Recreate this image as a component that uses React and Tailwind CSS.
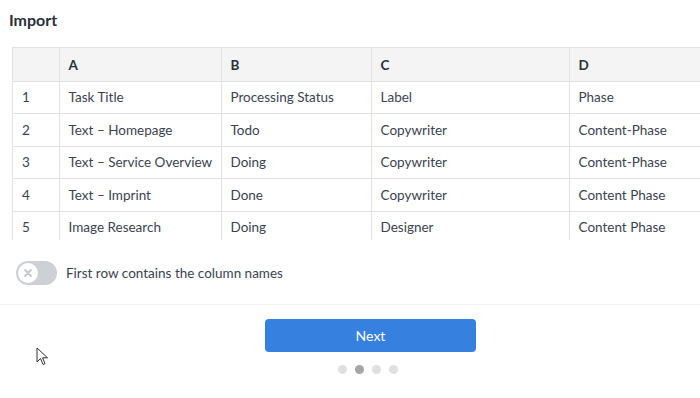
import React from "react";

const rows = [
  ["1", "Task Title", "Processing Status", "Label", "Phase"],
  ["2", "Text – Homepage", "Todo", "Copywriter", "Content-Phase"],
  ["3", "Text – Service Overview", "Doing", "Copywriter", "Content-Phase"],
  ["4", "Text – Imprint", "Done", "Copywriter", "Content Phase"],
  ["5", "Image Research", "Doing", "Designer", "Content Phase"],
];

const cols = ["w-[46px]", "w-[162px]", "w-[150px]", "w-[198px]", "w-[160px]"];

function App() {
  return (
    <div className="relative w-[700px] h-[398px] overflow-hidden bg-white text-[#3b4352] font-['Lato','Noto_Sans',sans-serif]">
      <h1 className="pl-[9px] pt-[9px] h-[47px] text-[16px] font-bold text-[#2a303b] leading-[22px]">Import</h1>

      <div className="ml-[12px] h-[193px] overflow-hidden border-l border-t border-[#e2e2e2]">
        <table className="w-[716px] border-collapse table-fixed text-[13.5px]">
          <thead>
            <tr className="bg-[#f4f4f4] h-[33px]">
              {["", "A", "B", "C", "D"].map((h, i) => (
                <th key={i} className={`${cols[i]} text-left font-bold text-[#2a303b] pl-[9px] pt-[2px] border-r border-b border-[#e2e2e2]`}>
                  {h}
                </th>
              ))}
            </tr>
          </thead>
          <tbody>
            {rows.map((r) => (
              <tr key={r[0]} className="h-[32.5px]">
                {r.map((c, i) => (
                  <td key={i} className={`${cols[i]} pl-[9px] whitespace-nowrap border-r border-b border-[#e2e2e2]`}>
                    {c}
                  </td>
                ))}
              </tr>
            ))}
          </tbody>
        </table>
      </div>

      <div className="flex items-center gap-[9px] pl-[16px] mt-[21px] h-[24px]">
        <div className="w-[41px] h-[24px] rounded-full bg-[#cdd0d5] p-[2px] flex">
          <div className="w-[20px] h-[20px] rounded-full bg-white flex items-center justify-center">
            <svg width="10" height="10" viewBox="0 0 10 10">
              <path d="M2 2L8 8M8 2L2 8" stroke="#c3c6cb" strokeWidth="1.8" strokeLinecap="round" />
            </svg>
          </div>
        </div>
        <span className="text-[13.5px]">First row contains the column names</span>
      </div>

      <div className="mt-[19px] border-t border-[#f1f1f1]" />

      <div className="flex flex-col items-center pt-[14px] pl-[41px]">
        <button className="w-[211px] h-[33px] rounded-[4px] bg-[#3680df] text-white text-[14px]">Next</button>
        <div className="flex gap-[8px] mt-[13px] mr-[6px]">
          <span className="w-[9px] h-[9px] rounded-full bg-[#e0e0e0]" />
          <span className="w-[9px] h-[9px] rounded-full bg-[#a6a6a6]" />
          <span className="w-[9px] h-[9px] rounded-full bg-[#e0e0e0]" />
          <span className="w-[9px] h-[9px] rounded-full bg-[#e0e0e0]" />
        </div>
      </div>

      <svg className="absolute left-[36px] top-[347px]" width="13" height="20" viewBox="0 0 13 20">
        <path d="M1 1L1 15L4.5 11.5L7 17.5L9 16.6L6.6 10.8L11.5 10.8Z" fill="white" stroke="#333" strokeWidth="1" strokeLinejoin="round" />
      </svg>
    </div>
  );
}

export default App;
